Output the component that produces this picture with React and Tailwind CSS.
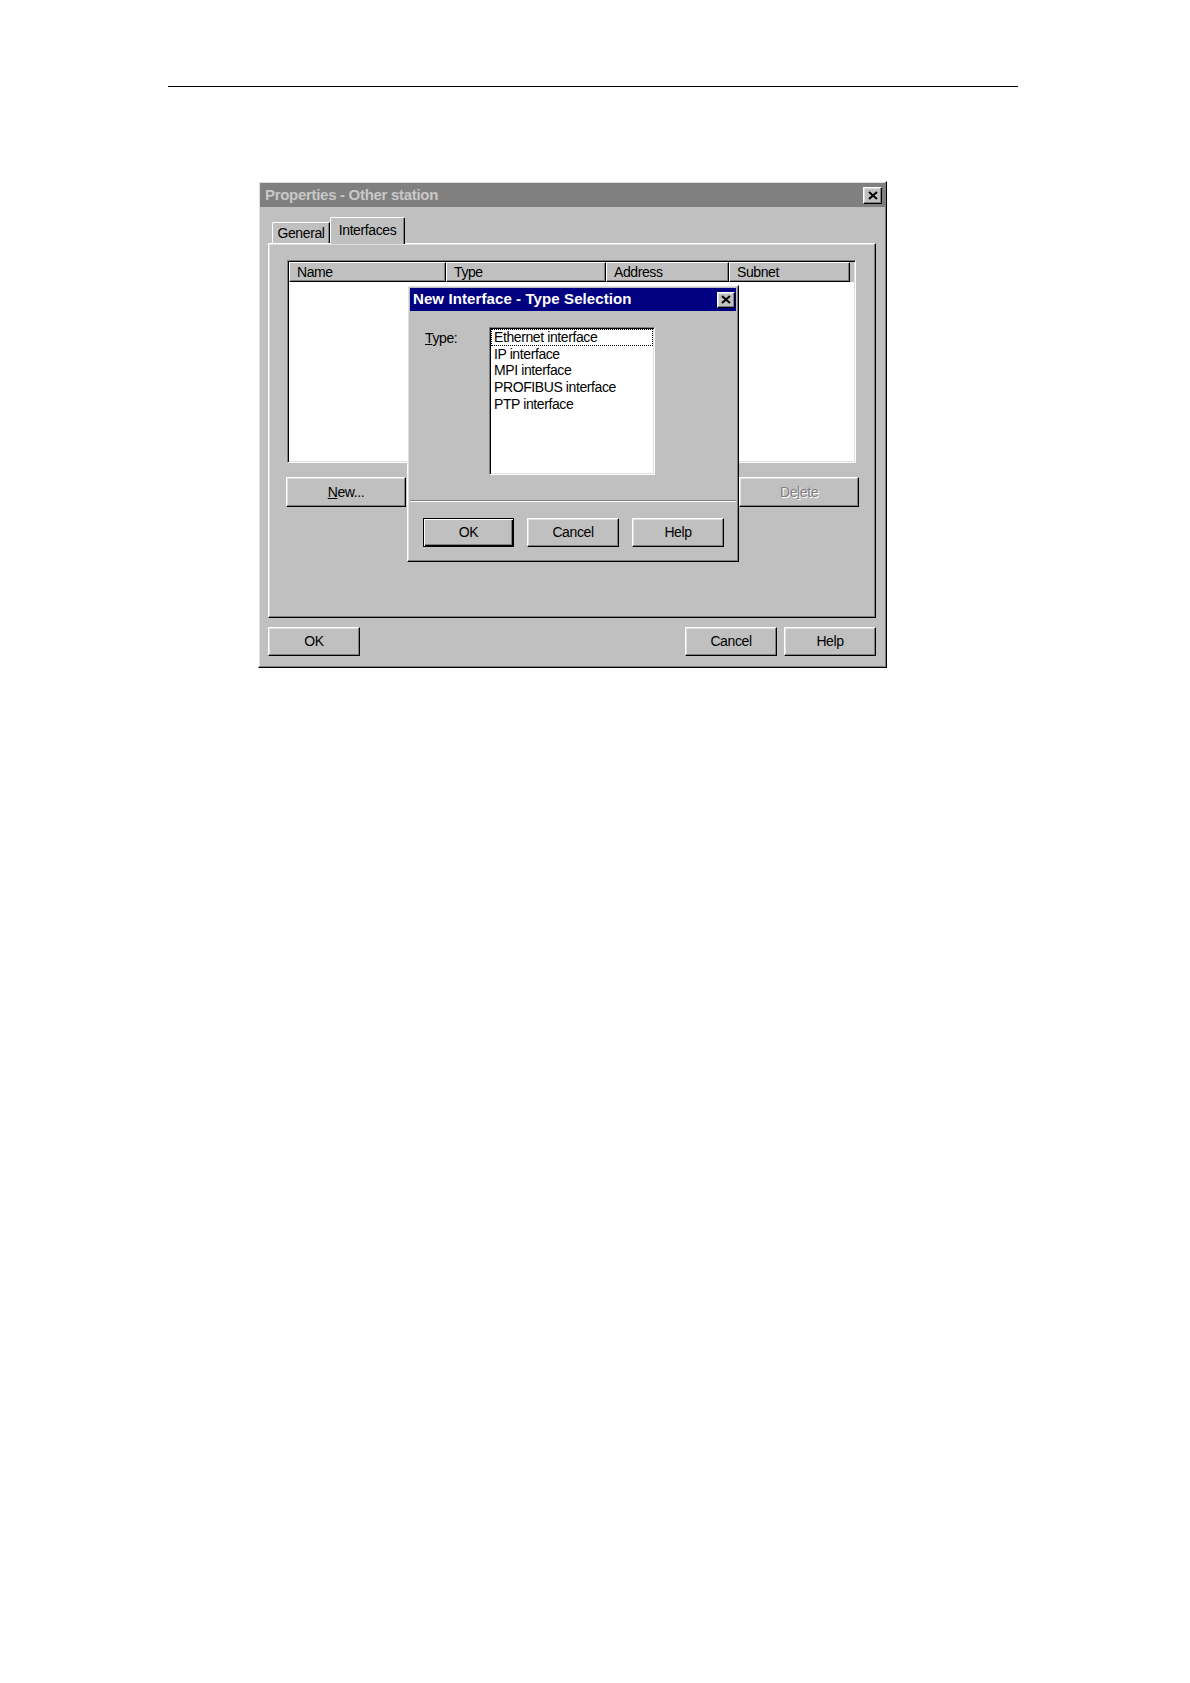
const raised =
  'bg-[#c0c0c0] border border-t-white border-l-white border-r-black border-b-black shadow-[inset_-1px_-1px_0_#808080,inset_1px_1px_0_#dfdfdf]'
const sunken =
  'border border-t-[#808080] border-l-[#808080] border-r-white border-b-white shadow-[inset_1px_1px_0_#000,inset_-1px_-1px_0_#dfdfdf]'
const txt = 'text-[14px] tracking-[-0.4px]'

function CloseGlyph() {
  return (
    <svg width="10" height="9" viewBox="0 0 10 9">
      <path d="M1 1 L9 8 M9 1 L1 8" stroke="#000" strokeWidth="2" />
    </svg>
  )
}

function Button({ children, className = '', isDefault = false, disabled = false }) {
  const look = isDefault
    ? 'bg-[#c0c0c0] border border-black shadow-[inset_1px_1px_0_#fff,inset_-1px_-1px_0_#000,inset_-2px_-2px_0_#808080]'
    : raised
  return (
    <div
      className={`${look} ${txt} h-[29px] flex items-center justify-center ${
        disabled ? 'text-[#808080] [text-shadow:1px_1px_0_#fff]' : 'text-black'
      } ${className}`}
    >
      {children}
    </div>
  )
}

function HeaderCell({ label, w }) {
  return (
    <div
      className={`${w} h-full flex items-center pl-[7px] border-t border-l border-white border-r border-r-black border-b border-b-black shadow-[inset_-1px_-1px_0_#808080] text-black ${txt}`}
    >
      {label}
    </div>
  )
}

function TypeDialog() {
  const items = ['Ethernet interface', 'IP interface', 'MPI interface', 'PROFIBUS interface', 'PTP interface']
  return (
    <div className={`absolute left-[148px] top-[103px] w-[332px] h-[277px] p-[2px] ${raised} flex flex-col`}>
      <div className="h-[23px] bg-[#000080] flex items-center justify-between pl-[3px] pr-[1px]">
        <span className="text-white font-bold text-[15px] tracking-[0.1px]">New Interface - Type Selection</span>
        <div className={`${raised} w-[18px] h-[16px] flex items-center justify-center`}>
          <CloseGlyph />
        </div>
      </div>

      <div className="flex pl-[15px] pt-[16px]">
        <div className={`w-[64px] pt-[1px] text-black ${txt}`}>
          <span className="underline">T</span>ype:
        </div>
        <div className={`w-[166px] h-[148px] bg-white ${sunken} p-[1px]`}>
          {items.map((it, i) => (
            <div
              key={it}
              className={`h-[16.67px] leading-[16.67px] pl-[3px] text-black ${txt} ${
                i === 0 ? '[outline:1px_dotted_#000] [outline-offset:-1px]' : ''
              }`}
            >
              {it}
            </div>
          ))}
        </div>
      </div>

      <div className="mt-[25px] h-[2px] border-t border-t-[#808080] border-b border-b-white" />

      <div className="flex gap-[13px] pl-[13px] mt-[16px]">
        <Button isDefault className="w-[91px]">OK</Button>
        <Button className="w-[92px]">Cancel</Button>
        <Button className="w-[92px]">Help</Button>
      </div>
    </div>
  )
}

export default function App() {
  return (
    <div className="w-full h-[1683px] bg-white font-['Liberation_Sans',Arial,sans-serif] pt-[86px]">
      <div className="ml-[168px] w-[850px] h-px bg-black" />

      <div className={`relative ml-[258px] mt-[94px] w-[629px] h-[487px] p-px ${raised} flex flex-col`}>
        <div className="h-[24px] bg-[#808080] flex items-center justify-between pl-[5px] pr-[3px]">
          <span className="text-[#c8c8c8] font-bold text-[15px] tracking-[-0.3px]">Properties - Other station</span>
          <div className={`${raised} w-[19px] h-[17px] flex items-center justify-center`}>
            <CloseGlyph />
          </div>
        </div>

        <div className="flex items-end ml-[12px] mt-[10px] h-[26px]">
          <div className="w-[58px] h-[21px] flex items-center justify-center border-t border-l border-white border-r border-r-black rounded-tl-[2px] shadow-[inset_-1px_0_0_#808080]">
            <span className={`text-black ${txt}`}>General</span>
          </div>
          <div className="relative z-10 -mb-px w-[75px] h-[27px] bg-[#c0c0c0] flex items-center justify-center pb-[2px] border-t border-l border-white border-r border-r-black rounded-t-[2px] shadow-[inset_-1px_0_0_#808080]">
            <span className={`text-black ${txt}`}>Interfaces</span>
          </div>
        </div>

        <div className={`ml-[8px] w-[608px] h-[375px] ${raised} pl-[18px] pt-[16px]`}>
          <div className={`w-[569px] h-[203px] bg-white ${sunken} p-px`}>
            <div className="h-[20px] bg-[#c0c0c0] flex">
              <HeaderCell label="Name" w="w-[157px]" />
              <HeaderCell label="Type" w="w-[160px]" />
              <HeaderCell label="Address" w="w-[123px]" />
              <HeaderCell label="Subnet" w="w-[121px]" />
            </div>
          </div>

          <div className="flex justify-between -ml-px w-[573px] mt-[14px]">
            <Button className="w-[120px] !h-[30px]">
              <span>
                <span className="underline">N</span>ew...
              </span>
            </Button>
            <Button className="w-[120px] !h-[30px]">
              <span>
                <span className="underline">E</span>dit...
              </span>
            </Button>
            <Button disabled className="w-[120px] !h-[30px]">
              <span>
                De<span className="underline">l</span>ete
              </span>
            </Button>
          </div>
        </div>

        <div className="flex justify-between ml-[8px] w-[608px] mt-[9px]">
          <Button className="w-[92px]">OK</Button>
          <div className="flex gap-[7px]">
            <Button className="w-[92px]">Cancel</Button>
            <Button className="w-[92px]">Help</Button>
          </div>
        </div>

        <TypeDialog />
      </div>
    </div>
  )
}
